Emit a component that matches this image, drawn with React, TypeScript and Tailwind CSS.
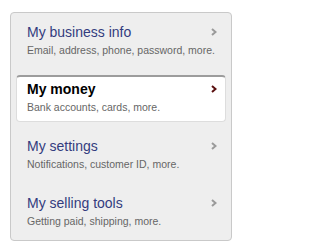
import React from "react";

const items = [
  { title: "My business info", sub: "Email, address, phone, password, more." },
  { title: "My money", sub: "Bank accounts, cards, more.", active: true },
  { title: "My settings", sub: "Notifications, customer ID, more." },
  { title: "My selling tools", sub: "Getting paid, shipping, more." },
];

function Chevron({ color }: { color: string }) {
  return (
    <svg width="6" height="8" viewBox="0 0 6 8" className="shrink-0">
      <polyline points="1,1 4.5,4 1,7" fill="none" stroke={color} strokeWidth="2" />
    </svg>
  );
}

export default function App() {
  return (
    <div className="w-[243px] h-[252px] bg-white pt-[12px] pl-[10px]" style={{ fontFamily: '"Liberation Sans", Arial, sans-serif' }}>
      <div className="w-[222px] h-[229px] bg-[#eeeeee] border border-[#c9c9c9] rounded-[4px] px-[5px] pt-[5px] flex flex-col gap-[10px]">
        {items.map((it) => (
          <div
            key={it.title}
            className={`h-[47px] rounded-[4px] border pl-[10px] pr-[8px] pt-[4px] ${
              it.active
                ? "bg-white border-[#dddddd] border-t-2 border-t-[#9c9c9c]"
                : "border-transparent border-t-2"
            }`}
          >
            <div className="flex items-center justify-between">
              <div
                className={`text-[14px] leading-[16px] ${
                  it.active ? "font-bold text-black" : "text-[#333c7e]"
                }`}
              >
                {it.title}
              </div>
              <Chevron color={it.active ? "#5a1010" : "#9a9a9a"} />
            </div>
            <div className="text-[10.5px] leading-[13px] mt-[4px] text-[#666666] whitespace-nowrap">{it.sub}</div>
          </div>
        ))}
      </div>
    </div>
  );
}
